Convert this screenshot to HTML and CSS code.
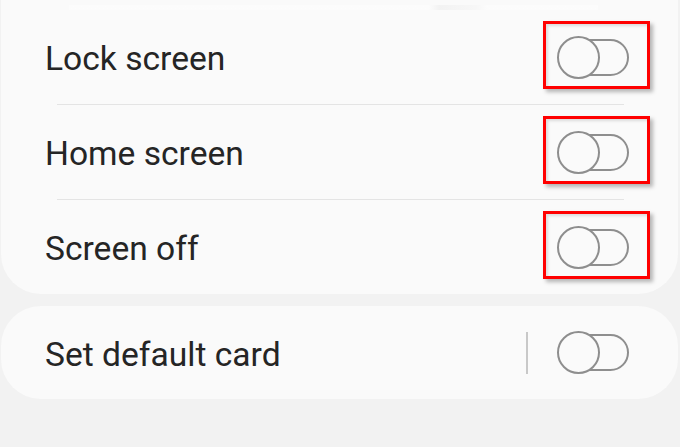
FILE: index.html
```html
<!DOCTYPE html>
<html>
<head>
<meta charset="utf-8">
<link rel="stylesheet" href="styles.css">
</head>
<body>
<div class="card card-top">
  <div class="ghost"></div>
  <div class="row">
    <span class="label">Lock screen</span>
    <div class="toggle marked"><span class="track"></span><span class="knob"></span></div>
  </div>
  <div class="sep"></div>
  <div class="row">
    <span class="label">Home screen</span>
    <div class="toggle marked"><span class="track"></span><span class="knob"></span></div>
  </div>
  <div class="sep"></div>
  <div class="row">
    <span class="label">Screen off</span>
    <div class="toggle marked"><span class="track"></span><span class="knob"></span></div>
  </div>
</div>
<div class="card card-bottom">
  <div class="row row-single">
    <span class="label">Set default card</span>
    <div class="right">
      <span class="vdiv"></span>
      <div class="toggle"><span class="track"></span><span class="knob"></span></div>
    </div>
  </div>
</div>
</body>
</html>
```
FILE: styles.css
```css
html, body {
  margin: 0;
  padding: 0;
  background: #f2f2f2;
}
body {
  width: 680px;
  height: 447px;
  overflow: hidden;
  font-family: Roboto, "Noto Sans", sans-serif;
  color: #252525;
}
.card {
  background: #fafafa;
  margin: 0 2px 0 1px;
}
.card-top {
  border-radius: 0 0 40px 40px;
  padding-top: 5px;
}
.ghost {
  height: 5px;
  margin: 0 80px 0 68px;
  background: linear-gradient(90deg, #fdfdfd 0%, #fdfdfd 68%, #efefef 70%, #f6f6f6 77%, #fdfdfd 79%);
  opacity: 0.7;
}
.card-bottom {
  margin-top: 12px;
  border-radius: 40px;
}
.row {
  display: flex;
  align-items: center;
  justify-content: space-between;
  height: 94px;
  padding: 0 49px 0 44px;
}
.row-single {
  height: 93px;
}
.label {
  font-size: 33.6px;
  padding-top: 3px;
}
.sep {
  height: 1px;
  background: #e4e4e4;
  margin: 0 54px 0 56px;
}
.right {
  display: flex;
  align-items: center;
  gap: 29px;
}
.vdiv {
  width: 2px;
  height: 42px;
  background: #c8c8c8;
}
.toggle {
  position: relative;
  width: 72px;
  height: 43px;
}
.track {
  position: absolute;
  left: 8px;
  top: 3px;
  width: 64px;
  height: 37px;
  box-sizing: border-box;
  border: 2px solid #8e8e8e;
  border-radius: 19px;
}
.knob {
  position: absolute;
  left: 0;
  top: 0;
  width: 43px;
  height: 43px;
  box-sizing: border-box;
  border: 2px solid #8e8e8e;
  border-radius: 50%;
  background: #fafafa;
}
.marked::after {
  content: "";
  position: absolute;
  left: -14px;
  top: -15px;
  width: 107px;
  height: 68px;
  box-sizing: border-box;
  border: 3px solid #ff0000;
  box-shadow: 3px 3px 4px rgba(0, 0, 0, 0.28), inset 2px 2px 3px rgba(0, 0, 0, 0.12);
}
```
